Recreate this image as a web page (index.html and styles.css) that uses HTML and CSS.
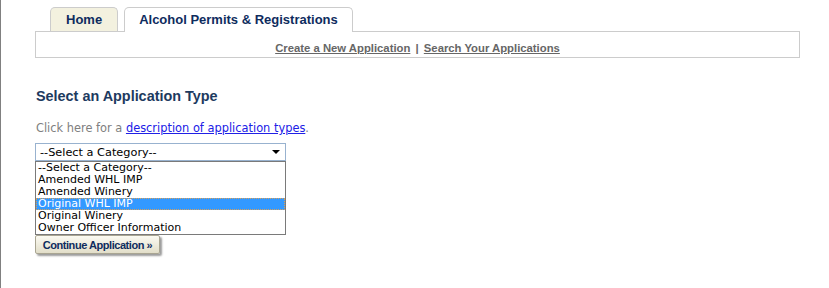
FILE: index.html
```html
<!DOCTYPE html>
<html lang="en">
<head>
    <meta charset="UTF-8">
    <title>Alcohol Permits &amp; Registrations</title>
    <link rel="stylesheet" href="styles.css">
</head>
<body>
    <div class="page">
        <!-- Tabs -->
        <div class="tabs">
            <a class="tab" href="#">Home</a>
            <a class="tab active" href="#">Alcohol Permits &amp; Registrations</a>
        </div>
        <div class="subnav">
            <a href="#">Create a New Application</a>
            <span class="sep">|</span>
            <a href="#">Search Your Applications</a>
        </div>

        <!-- Application type -->
        <h2>Select an Application Type</h2>
        <p class="hint">Click here for a <a href="#">description of application types</a>.</p>

        <div class="select">
            <span>--Select a Category--</span>
            <span class="arrow"></span>
        </div>
        <ul class="options">
            <li>--Select a Category--</li>
            <li>Amended WHL IMP</li>
            <li>Amended Winery</li>
            <li class="selected">Original WHL IMP</li>
            <li>Original Winery</li>
            <li>Owner Officer Information</li>
        </ul>

        <button class="btn">Continue Application &raquo;</button>
    </div>
</body>
</html>
```

FILE: styles.css
```css
html, body {
    height: 100%;
}
body {
    margin: 0;
    font-family: "Liberation Sans", Arial, sans-serif;
    background: #fff;
    border-left: 1px solid #808080;
    box-sizing: border-box;
}
.page {
    padding: 7px 29px 0 34px;
}
.tabs {
    display: flex;
    gap: 6px;
    margin-left: 15px;
    align-items: flex-start;
    height: 24px;
}
.tab {
    display: block;
    height: 23px;
    line-height: 23px;
    padding: 0 15px;
    border: 1px solid #ccc;
    border-bottom: none;
    border-radius: 5px 5px 0 0;
    background: #f3f1df;
    color: #0e2c5e;
    font-size: 13px;
    font-weight: bold;
    text-decoration: none;
}
.tab.active {
    position: relative;
    z-index: 1;
    height: 24px;
    padding: 0 14px;
    background: #fff;
}
.subnav {
    width: 763px;
    border: 1px solid #ccc;
    padding: 9px 0 2px;
    line-height: 14px;
    font-size: 11.3px;
    font-weight: bold;
    text-align: center;
    color: #666;
}
.subnav a {
    color: #666;
}
.subnav .sep {
    margin: 0 2px;
}
h2 {
    margin: 30px 0 0 1px;
    font-size: 14.4px;
    line-height: 16px;
    color: #1d3a60;
}
.hint {
    margin: 17px 0 0 1px;
    font-family: "DejaVu Sans", Verdana, sans-serif;
    font-size: 11.4px;
    line-height: 14px;
    color: #808080;
}
.hint a {
    color: #2020e6;
}
.select {
    display: flex;
    justify-content: space-between;
    align-items: center;
    box-sizing: border-box;
    width: 251px;
    height: 18px;
    margin-top: 8px;
    padding: 0 5px 0 4px;
    border: 1px solid #98b2cf;
    font-family: "DejaVu Sans", Verdana, sans-serif;
    font-size: 11.3px;
    color: #000;
}
.arrow {
    width: 0;
    height: 0;
    border-left: 4px solid transparent;
    border-right: 4px solid transparent;
    border-top: 4px solid #000;
}
.options {
    list-style: none;
    width: 249px;
    margin: 0;
    padding: 0;
    border: 1px solid #7a7a7a;
    font-family: "DejaVu Sans", Verdana, sans-serif;
    font-size: 11px;
    line-height: 12px;
    color: #000;
}
.options li {
    padding: 0 2px;
    height: 12px;
}
.options .selected {
    background: #3399ff;
    color: #fff;
    outline: 1px dotted #d9a05a;
    outline-offset: -1px;
}
.btn {
    display: block;
    width: 125px;
    height: 19px;
    margin: 0;
    padding: 0;
    border: 1px solid #a9a592;
    border-radius: 2px;
    background: linear-gradient(#fbfaf2, #e2dec9);
    box-shadow: 2px 2px 2px #9c9c9c;
    color: #0e2c5e;
    font-family: "Liberation Sans", Arial, sans-serif;
    font-size: 11px;
    font-weight: bold;
    letter-spacing: -0.45px;
}
```
